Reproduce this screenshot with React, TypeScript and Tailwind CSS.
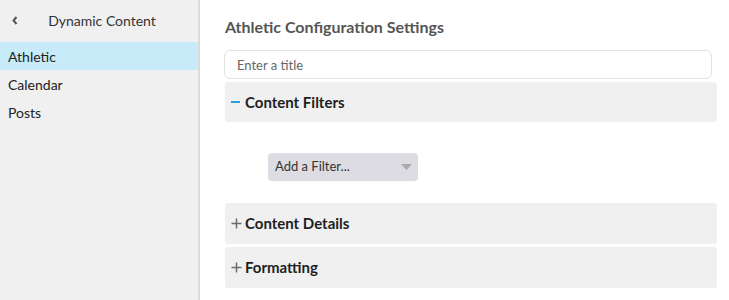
import React from 'react'

const navItems = ['Athletic', 'Calendar', 'Posts']

const Plus = () => (
    <svg width="11" height="11" viewBox="0 0 11 11" className="shrink-0">
        <path d="M5.5 0.5v10M0.5 5.5h10" stroke="#6b6b6b" strokeWidth="1.5" fill="none" />
    </svg>
)

const Panel = ({ title }: { title: string }) => (
    <div className="flex h-[41px] items-center gap-[3px] rounded-[3px] bg-[#f0f0f0] pl-[6px]">
        <Plus />
        <span className="text-[15px] font-bold text-[#1e1e1e]">{title}</span>
    </div>
)

export default function App() {
    return (
        <div className="flex h-[300px] w-[729px] overflow-hidden bg-white font-['Lato','Liberation_Sans',sans-serif]">
            {/* Sidebar */}
            <aside className="w-[200px] shrink-0 border-r-2 border-[#dadade] bg-[#f0f0f0]">
                <div className="relative flex h-[42px] items-center justify-center pb-[2px] pl-[6px]">
                    <svg width="6" height="9" viewBox="0 0 6 9" className="absolute left-[12px] top-[16px]">
                        <path d="M4.5 1L1.5 4.5L4.5 8" stroke="#555" strokeWidth="2" fill="none" />
                    </svg>
                    <span className="text-[14px] text-[#333]">Dynamic Content</span>
                </div>
                <ul>
                    {navItems.map((item, i) => (
                        <li key={item} className={`flex h-[28px] items-center pl-[8px] text-[14px] text-[#222] ${i === 0 ? 'bg-[#c7ebf8]' : ''}`}>
                            {item}
                        </li>
                    ))}
                </ul>
            </aside>

            {/* Main */}
            <main className="flex-1 pl-[24px] pr-[12px]">
                <h1 className="mt-[17px] pl-[1px] text-[16px] leading-[20px] font-bold text-[#555]">Athletic Configuration Settings</h1>
                <input
                    placeholder="Enter a title"
                    className="mt-[13px] block h-[29px] w-[488px] rounded-[6px] border border-[#e2e2e2] px-[12px] text-[13px] text-[#333] outline-none placeholder:text-[#666]"
                />
                <div className="ml-[1px] mt-[3px]">
                    <div className="flex h-[40px] items-center gap-[5px] rounded-[3px] bg-[#f0f0f0] pl-[6px]">
                        <span className="block h-[2px] w-[9px] bg-[#28a0da]"></span>
                        <span className="text-[15px] font-bold text-[#1e1e1e]">Content Filters</span>
                    </div>
                    <div className="pb-[22px] pl-[43px] pt-[31px]">
                        <div className="flex h-[28px] w-[150px] items-center justify-between rounded-[4px] bg-[#dcdce2] pl-[7px] pr-[6px]">
                            <span className="text-[13px] text-[#333]">Add a Filter...</span>
                            <svg width="11" height="6" viewBox="0 0 11 6">
                                <path d="M0 0h11L5.5 6z" fill="#aaa" />
                            </svg>
                        </div>
                    </div>
                    <div className="flex flex-col gap-[3px]">
                        <Panel title="Content Details" />
                        <Panel title="Formatting" />
                    </div>
                </div>
            </main>
        </div>
    )
}
